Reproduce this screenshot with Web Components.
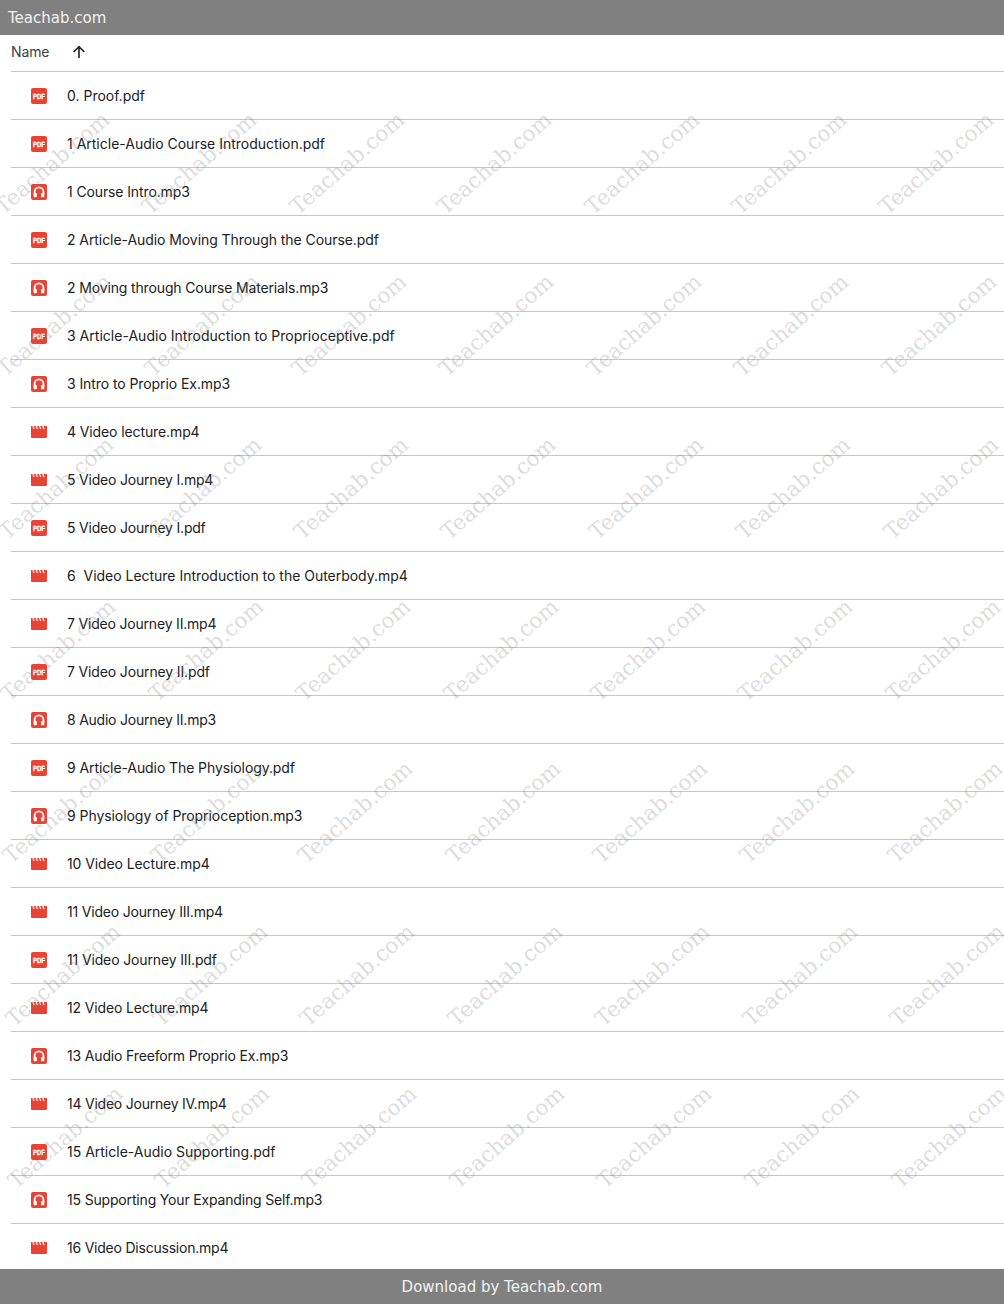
<!DOCTYPE html>
<html>
<head>
<meta charset="utf-8">
<title>Teachab.com</title>
<style>
  html, body { margin: 0; background: #fff; }
</style>
</head>
<body>
<drive-page>
  <top-bar slot="top">Teachab.com</top-bar>
  <list-head slot="head">Name</list-head>
  <file-row type="pdf">0. Proof.pdf</file-row>
  <file-row type="pdf">1 Article-Audio Course Introduction.pdf</file-row>
  <file-row type="audio" track="-.12">1 Course Intro.mp3</file-row>
  <file-row type="pdf" track="-.07">2 Article-Audio Moving Through the Course.pdf</file-row>
  <file-row type="audio" track="-.14">2 Moving through Course Materials.mp3</file-row>
  <file-row type="pdf" track=".02">3 Article-Audio Introduction to Proprioceptive.pdf</file-row>
  <file-row type="audio" track="-.08">3 Intro to Proprio Ex.mp3</file-row>
  <file-row type="video" track="-.11">4 Video lecture.mp4</file-row>
  <file-row type="video" track="-.2">5 Video Journey I.mp4</file-row>
  <file-row type="pdf" track="-.2">5 Video Journey I.pdf</file-row>
  <file-row type="video" track="-.02">6&nbsp; Video Lecture Introduction to the Outerbody.mp4</file-row>
  <file-row type="video" track="-.19">7 Video Journey II.mp4</file-row>
  <file-row type="pdf" track="-.14">7 Video Journey II.pdf</file-row>
  <file-row type="audio" track="-.23">8 Audio Journey II.mp3</file-row>
  <file-row type="pdf" track="-.09">9 Article-Audio The Physiology.pdf</file-row>
  <file-row type="audio" track="-.06">9 Physiology of Proprioception.mp3</file-row>
  <file-row type="video" track="-.1">10 Video Lecture.mp4</file-row>
  <file-row type="video" track="-.2">11 Video Journey III.mp4</file-row>
  <file-row type="pdf" track="-.14">11 Video Journey III.pdf</file-row>
  <file-row type="video" track="-.15">12 Video Lecture.mp4</file-row>
  <file-row type="audio" track="-.16">13 Audio Freeform Proprio Ex.mp3</file-row>
  <file-row type="video" track="-.23">14 Video Journey IV.mp4</file-row>
  <file-row type="pdf">15 Article-Audio Supporting.pdf</file-row>
  <file-row type="audio" track="-.17">15 Supporting Your Expanding Self.mp3</file-row>
  <file-row type="video" track="-.22">16 Video Discussion.mp4</file-row>
  <water-marks slot="over"></water-marks>
  <bottom-bar slot="over">Download by Teachab.com</bottom-bar>
</drive-page>

<script>
class DrivePage extends HTMLElement {
  constructor() {
    super();
    this.attachShadow({ mode: "open" });
    this.shadowRoot.innerHTML = `
      <style>
        :host {
          display: flex;
          flex-direction: column;
          position: relative;
          width: 1004px;
          height: 1304px;
          overflow: hidden;
          background: #fff;
        }
        .list { display: flex; flex-direction: column; padding-left: 11px; }
      </style>
      <slot name="top"></slot>
      <div class="list">
        <slot name="head"></slot>
        <slot></slot>
      </div>
      <slot name="over"></slot>
    `;
  }
}

class TopBar extends HTMLElement {
  constructor() {
    super();
    this.attachShadow({ mode: "open" });
    this.shadowRoot.innerHTML = `
      <style>
        :host {
          display: flex;
          align-items: center;
          height: 35px;
          padding-left: 8px;
          background: #808080;
          color: #f2f2f2;
          font: 15px "DejaVu Sans", sans-serif;
        }
      </style>
      <slot></slot>
    `;
  }
}

class ListHead extends HTMLElement {
  constructor() {
    super();
    this.attachShadow({ mode: "open" });
    this.shadowRoot.innerHTML = `
      <style>
        :host {
          display: flex;
          align-items: center;
          gap: 23px;
          height: 33px;
          padding-bottom: 3px;
          border-bottom: 1px solid #c6c6c6;
          color: #3c4043;
          font: 14px Inter, sans-serif;
          letter-spacing: -0.1px;
        }
        svg { display: block; }
      </style>
      <slot></slot>
      <svg width="14" height="14" viewBox="0 0 14 14">
        <path d="M7 13V2M1.7 7 7 1.7 12.3 7" fill="none" stroke="#202124" stroke-width="1.6"/>
      </svg>
    `;
  }
}

const ICONS = {
  pdf: `<rect width="16" height="16" rx="2" fill="#ea4335"/>
        <text x="8" y="10.8" text-anchor="middle" textLength="12" lengthAdjust="spacingAndGlyphs" fill="#fff" stroke="#fff" stroke-width=".3" font-family="'Liberation Sans', sans-serif" font-weight="700" font-size="7.6">PDF</text>`,
  audio: `<rect width="16" height="16" rx="2" fill="#ea4335"/>
        <path d="M3.6 10.5V7.8a4.4 4.4 0 0 1 8.8 0v2.7" fill="none" stroke="#fff" stroke-width="1.8"/>
        <rect x="2.7" y="9" width="3.2" height="4.2" rx=".8" fill="#fff"/>
        <rect x="10.1" y="9" width="3.2" height="4.2" rx=".8" fill="#fff"/>`,
  video: `<path d="M0 2h16v11a1 1 0 0 1-1 1H1a1 1 0 0 1-1-1z" fill="#ea4335"/>
        <path d="M2 2l1 3M5.3 2l1 3M8.6 2l1 3M11.9 2l1 3" fill="none" stroke="#fff" stroke-width="1.2"/>`
};

class FileRow extends HTMLElement {
  constructor() {
    super();
    this.attachShadow({ mode: "open" });
    this.shadowRoot.innerHTML = `
      <style>
        :host {
          display: flex;
          align-items: center;
          height: 47px;
          padding-left: 20px;
          gap: 20px;
          border-bottom: 1px solid #c6c6c6;
          color: #202124;
          font: 14px Inter, sans-serif;
          white-space: nowrap;
        }
        svg { display: block; flex: none; }
      </style>
      <svg width="16" height="16" viewBox="0 0 16 16"></svg>
      <slot></slot>
    `;
  }

  connectedCallback() {
    const type = this.getAttribute("type");
    this.shadowRoot.querySelector("svg").innerHTML = ICONS[type];
    if (this.hasAttribute("track")) {
      this.style.letterSpacing = this.getAttribute("track") + "px";
    }
  }
}

class WaterMarks extends HTMLElement {
  constructor() {
    super();
    this.attachShadow({ mode: "open" });
    this.shadowRoot.innerHTML = `
      <style>
        :host {
          display: block;
          position: absolute;
          inset: 0;
          pointer-events: none;
        }
        span {
          position: absolute;
          transform: translate(-50%, -50%) rotate(-41deg);
          color: rgba(120, 120, 120, 0.27);
          font: 21.5px "DejaVu Serif", serif;
          white-space: nowrap;
        }
      </style>
    `;
  }

  connectedCallback() {
    // 7 rows x 7 columns, each row drifts 2px to the right
    for (let r = 0; r < 7; r++) {
      for (let c = 0; c < 7; c++) {
        const mark = document.createElement("span");
        mark.textContent = "Teachab.com";
        mark.style.left = 52 + 147.4 * c + 2.1 * r + "px";
        mark.style.top = 163 + 162.3 * r + "px";
        this.shadowRoot.appendChild(mark);
      }
    }
  }
}

class BottomBar extends HTMLElement {
  constructor() {
    super();
    this.attachShadow({ mode: "open" });
    this.shadowRoot.innerHTML = `
      <style>
        :host {
          display: flex;
          align-items: center;
          justify-content: center;
          position: absolute;
          left: 0;
          right: 0;
          bottom: 0;
          height: 35px;
          background: #808080;
          color: #f2f2f2;
          font: 15px "DejaVu Sans", sans-serif;
        }
      </style>
      <slot></slot>
    `;
  }
}

customElements.define("drive-page", DrivePage);
customElements.define("top-bar", TopBar);
customElements.define("list-head", ListHead);
customElements.define("file-row", FileRow);
customElements.define("water-marks", WaterMarks);
customElements.define("bottom-bar", BottomBar);
</script>
</body>
</html>
